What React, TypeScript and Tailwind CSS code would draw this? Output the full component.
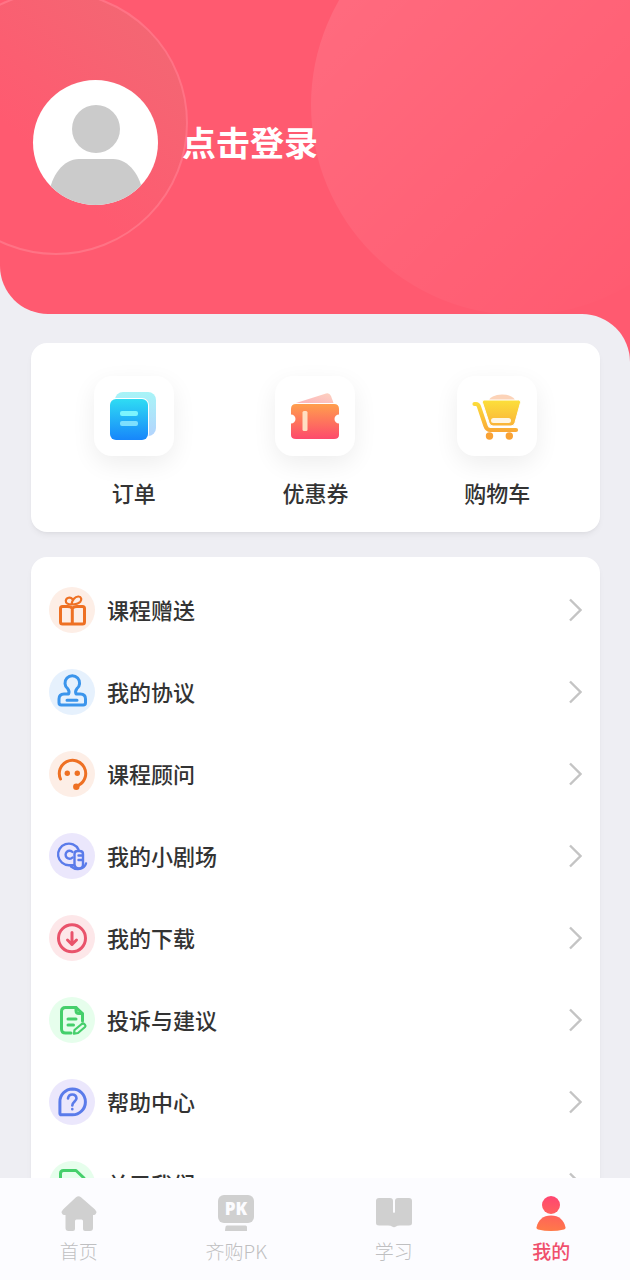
import type { ReactNode } from 'react';

interface Item {
  label: string;
  icon: ReactNode;
}

interface MenuItem extends Item {
  tone: string;
}

const shortcuts: Item[] = [
  {
    label: '订单',
    icon: (
      <svg viewBox="0 0 80 80" className="size-20" aria-hidden="true">
        <defs>
          <linearGradient id="orderBack" x1="0" y1="0" x2="0" y2="1">
            <stop offset="0" stopColor="#a8f4f7" />
            <stop offset="1" stopColor="#b3d4fd" />
          </linearGradient>
          <linearGradient id="orderFront" x1="0" y1="0" x2="0" y2="1">
            <stop offset="0" stopColor="#2fdcf3" />
            <stop offset="1" stopColor="#1786fb" />
          </linearGradient>
        </defs>
        <rect x="21" y="16" width="41" height="44" rx="8" fill="url(#orderBack)" />
        <rect x="15" y="22" width="40" height="43" rx="7" fill="#fff" />
        <rect x="16" y="23" width="38" height="41" rx="6" fill="url(#orderFront)" />
        <rect x="26" y="35" width="18" height="5" rx="2" fill="#7df4fd" />
        <rect x="26" y="45" width="18" height="5" rx="2" fill="#7ddffd" />
      </svg>
    ),
  },
  {
    label: '优惠券',
    icon: (
      <svg viewBox="0 0 80 80" className="size-20" aria-hidden="true">
        <defs>
          <linearGradient id="couponBack" x1="0" y1="1" x2="1" y2="0">
            <stop offset="0" stopColor="#fcb4bc" />
            <stop offset="1" stopColor="#fdd2c0" />
          </linearGradient>
          <linearGradient id="couponFront" x1="0" y1="0" x2="0" y2="1">
            <stop offset="0" stopColor="#ff9f4d" />
            <stop offset="1" stopColor="#fd4a6c" />
          </linearGradient>
        </defs>
        <path d="M21 27L51 17.500q3.500-1 5 2.500l2.500 7z" fill="url(#couponBack)" />
        <path
          d="M21 28h38q5 0 5 5v5.500a4.500 4.500 0 0 0 0 9V59q0 4-5 4H21q-5 0-5-4V47.500a4.500 4.500 0 0 0 0-9V33q0-5 5-5z"
          fill="url(#couponFront)"
        />
        <rect x="27.500" y="35" width="5" height="20" rx="1.500" fill="#ffdfc2" />
      </svg>
    ),
  },
  {
    label: '购物车',
    icon: (
      <svg viewBox="0 0 80 80" className="size-20" aria-hidden="true">
        <defs>
          <linearGradient id="cart" gradientUnits="userSpaceOnUse" x1="0" y1="24" x2="0" y2="64">
            <stop offset="0" stopColor="#fce03b" />
            <stop offset="1" stopColor="#f99a35" />
          </linearGradient>
        </defs>
        <ellipse cx="45" cy="25" rx="13" ry="6.500" fill="#fcd3b8" />
        <path
          d="M27 24h34.500q2.500 0 2 2.500l-5.500 20q-1 3.500-4 3.500H36q-3 0-4-3.500l-6.500-20q-.5-2.500 1.500-2.500z"
          fill="url(#cart)"
          stroke="#fff"
          strokeWidth="1"
        />
        <path
          d="M17.500 28H19q2 0 2.800 2.200L28.500 50q1.200 4 5 4H59"
          fill="none"
          stroke="url(#cart)"
          strokeWidth="4.200"
          strokeLinecap="round"
          strokeLinejoin="round"
        />
        <circle cx="32.500" cy="60" r="3.700" fill="#f9a235" />
        <circle cx="52.300" cy="60" r="3.700" fill="#f9a235" />
        <rect x="34" y="42" width="20" height="5" rx="2.500" fill="#fff6e2" />
      </svg>
    ),
  },
];

const menuItems: MenuItem[] = [
  {
    label: '课程赠送',
    tone: 'bg-[#fdeee6] text-[#ee7023]',
    icon: (
      <>
        <path d="M11.500 21.500q0-2 2-2h5q3.500 0 4.800 2 1.300-2 4.700-2h5.500q2 0 2 2V35q0 2-2 2h-20q-2 0-2-2zM23.300 21.500V37" />
        <path
          d="M23 17.500c-3.800.2-6.500-1.200-6.200-3.900.4-3 4.700-4.100 6.500-1.600M22.500 17.500c.6-4.700 3.500-8.200 7-8 3 .2 3.500 3.300 1.800 5.300-2 2.200-5.300 2.700-8.800 2.700z"
          strokeWidth="2.200"
        />
      </>
    ),
  },
  {
    label: '我的协议',
    tone: 'bg-[#e6f1fd] text-[#3b95ec]',
    icon: (
      <path d="M19.500 25c1.200-2.300.6-3.600-.8-5.300a7.300 7.300 0 1 1 9.200 0c-1.400 1.700-2 3-.8 5.300h4.400q5 0 5 5v3.700q0 2.300-2.300 2.300H12.300Q10 36 10 33.700V30q0-5 5-5zM18 31.200h10" />
    ),
  },
  {
    label: '课程顾问',
    tone: 'bg-[#fdeee6] text-[#ee7023]',
    icon: (
      <>
        <path d="M11.500 28a13.200 13.200 0 1 1 18.500 6L27.500 36" />
        <circle cx="18.300" cy="22.300" r="2.700" fill="currentColor" stroke="none" />
        <circle cx="28.300" cy="22.300" r="2.700" fill="currentColor" stroke="none" />
        <circle cx="27.300" cy="35.800" r="3.200" fill="currentColor" stroke="none" />
      </>
    ),
  },
  {
    label: '我的小剧场',
    tone: 'bg-[#ebe7fc] text-[#5a7bea]',
    icon: (
      <g strokeWidth="2.400">
        <path d="M29.500 16.500A10.800 10.800 0 1 0 20 32.200h4.500" />
        <path d="M23.500 19a4 4 0 1 0 0 5.500" />
        <path d="M25.500 21q0-3 3-3h2q3.500 0 3.500 3v10.500q0 4-4 4t-4.500-4zM29.500 22.500H34M29.500 27H34" />
        <path d="M22 33.500c5 4 13 3.500 15-3" />
      </g>
    ),
  },
  {
    label: '我的下载',
    tone: 'bg-[#fde7e9] text-[#e9536b]',
    icon: (
      <>
        <circle cx="23" cy="23.300" r="13.500" />
        <path d="M23 17.500v12M18.500 25l4.500 4.500 4.500-4.500" />
      </>
    ),
  },
  {
    label: '投诉与建议',
    tone: 'bg-[#e6feec] text-[#45cf6b]',
    icon: (
      <>
        <path d="M22 36h-5.500q-4 0-4-4V14.500q0-4 4-4H27l6.500 6V24" />
        <path d="M27 10.500v3q0 3 3 3h3M19 22h8M19 28h5.500" />
        <path
          d="M25.500 33l7.200-6q1.500-1 2.500 0l.8.800q1 1.200 0 2.200L29 36l-4 .7z"
          strokeWidth="2.200"
        />
      </>
    ),
  },
  {
    label: '帮助中心',
    tone: 'bg-[#ebe7fc] text-[#5a7bea]',
    icon: (
      <>
        <path d="M23.500 10a12.900 12.900 0 0 1 0 25.800h-11q-1.600 0-1.600-1.600V22.900A12.700 12.700 0 0 1 23.500 10z" />
        <path
          d="M19 19.500q.5-4 4.300-4t4.200 3.800c0 3-4.200 3.500-4.200 7.200M23.300 30v.2"
          strokeWidth="2.600"
        />
      </>
    ),
  },
  {
    label: '关于我们',
    tone: 'bg-[#e6feec] text-[#45cf6b]',
    icon: <path d="M11.500 34V12.500q0-3 3-3H27l8 7.500v17q0 3-3 3H14.500q-3 0-3-3zM18 24h11" />,
  },
];

const tabs: Item[] = [
  {
    label: '首页',
    icon: (
      <path
        d="M17 4.200q2.500-2 5 0L36 16.500q2 2 1 4-.6 1.500-2.500 1.500H34v13q0 3-3 3h-5q-2 0-2-2v-8q0-1.500-1.500-1.500h-5Q16 26.500 16 28v8q0 2-2 2H9.500q-3 0-3-3V22h-1Q3.600 22 3 20.500q-1-2 1-4z"
        fill="currentColor"
      />
    ),
  },
  {
    label: '齐购PK',
    icon: (
      <g fill="currentColor">
        <rect x="2" y="2" width="36" height="28" rx="6" />
        <path d="M11 32.500h18.500q1.500 0 1.500 1.500v3.500q0 .5-.5.500H9.500q-.5 0-.5-.5l.5-3.500q0-1.500 1.500-1.500z" />
        <text
          x="20"
          y="22"
          textAnchor="middle"
          fontSize="17"
          fontWeight="900"
          fontFamily='"Noto Sans", sans-serif'
          fill="#fcfcff"
        >
          PK
        </text>
      </g>
    ),
  },
  {
    label: '学习',
    icon: (
      <path
        d="M5 5h11q3 0 3 3v11q1 2 2 0V8q0-3 3-3h11q3 0 3 3v22q0 2.500-3 2.500h-9q-3 0-4 1-2 1.500-4 0-1-1-4-1H5q-3 0-3-2.500V8q0-3 3-3z"
        fill="currentColor"
      />
    ),
  },
  {
    label: '我的',
    icon: (
      <>
        <defs>
          <linearGradient id="me" gradientUnits="userSpaceOnUse" x1="22" y1="3" x2="18" y2="38">
            <stop offset="0" stopColor="#ff4572" />
            <stop offset="1" stopColor="#ff7a48" />
          </linearGradient>
        </defs>
        <circle cx="20" cy="12" r="9" fill="url(#me)" />
        <path
          d="M5.500 34.500C7 27 12 22.500 20 22.500S33 27 34.500 34.500q.3 1.500-1.500 2-13 3-26 0-1.700-.5-1.500-2z"
          fill="url(#me)"
        />
      </>
    ),
  },
];

const Profile = () => (
  <header className="relative overflow-hidden rounded-bl-[48px] bg-[#ff5a70] px-[33px] pt-20 pb-[109px]">
    <div className="absolute -top-[105px] left-[311px] size-[420px] rounded-full bg-linear-to-br from-white/12 to-transparent to-90%" />
    <div className="absolute -top-[9px] -left-[76px] size-[264px] rounded-full border-2 border-[#ff7385] bg-linear-to-tr from-transparent from-40% to-[#f06a74]" />
    <a
      href="#login"
      className="relative flex items-center gap-6 text-[34px] leading-10 font-bold text-white"
    >
      <svg viewBox="0 0 125 125" className="size-[125px] rounded-full bg-white" aria-hidden="true">
        <g fill="#cbcbcb">
          <circle cx="63" cy="49" r="24" />
          <path d="M46 79h34c16 0 28 17 30 36v10H16v-10c2-19 14-36 30-36z" />
        </g>
      </svg>
      <span className="pb-0.5">点击登录</span>
    </a>
  </header>
);

const Shortcuts = () => (
  <section className="grid grid-cols-3 rounded-2xl bg-white px-3 pt-[33px] pb-6 shadow-md shadow-black/5">
    {shortcuts.map(({ label, icon }) => (
      <a
        key={label}
        href="#shortcut"
        className="flex flex-col items-center gap-5 text-[22px] leading-8 font-medium text-[#333]"
      >
        <span className="rounded-[18px] bg-white shadow-[0_8px_24px_rgba(0,0,0,0.07)]">{icon}</span>
        {label}
      </a>
    ))}
  </section>
);

const Menu = () => (
  <ul className="rounded-2xl bg-white px-[18px] py-3 shadow-md shadow-black/5">
    {menuItems.map(({ label, tone, icon }) => (
      <li key={label}>
        <a
          href="#menu"
          className="flex h-[82px] items-center gap-3 text-[22px] leading-8 font-medium text-[#333]"
        >
          <span className={`rounded-full ${tone}`}>
            <svg
              viewBox="0 0 46 46"
              className="size-[46px]"
              fill="none"
              stroke="currentColor"
              strokeWidth="3"
              strokeLinecap="round"
              strokeLinejoin="round"
              aria-hidden="true"
            >
              {icon}
            </svg>
          </span>
          <span className="flex-1 pb-[3px]">{label}</span>
          <svg
            viewBox="0 0 14 24"
            className="h-6 w-3.5"
            fill="none"
            stroke="#c4c4c4"
            strokeWidth="2.400"
            aria-hidden="true"
          >
            <path d="M2 1.500L12.500 12 2 22.500" />
          </svg>
        </a>
      </li>
    ))}
  </ul>
);

const TabBar = () => (
  <nav className="grid shrink-0 grid-cols-4 bg-[#fcfcff] py-[15px]">
    {tabs.map(({ label, icon }) => {
      const active = label === '我的';
      return (
        <a
          key={label}
          href="#tab"
          aria-current={active ? 'page' : undefined}
          className={`flex flex-col items-center gap-1 text-[19px] leading-7 ${
            active ? 'font-medium text-[#f0506c]' : 'font-light text-[#bfbfc1]'
          }`}
        >
          <svg
            viewBox="0 0 40 40"
            className={active ? 'size-10' : 'size-10 text-[#d0d0d0]'}
            aria-hidden="true"
          >
            {icon}
          </svg>
          {label}
        </a>
      );
    })}
  </nav>
);

export default function App() {
  return (
    <div className="flex h-screen flex-col bg-[#eeeef3] font-['Noto_Sans_CJK_SC',sans-serif]">
      <main className="min-h-0 flex-1 overflow-x-hidden overflow-y-auto [scrollbar-width:none]">
        <Profile />
        <div className="bg-[#ff5a70]">
          <div className="flex flex-col gap-[25px] rounded-tr-[48px] bg-[#eeeef3] pt-[29px] pr-[30px] pb-6 pl-[31px]">
            <Shortcuts />
            <Menu />
          </div>
        </div>
      </main>
      <TabBar />
    </div>
  );
}
